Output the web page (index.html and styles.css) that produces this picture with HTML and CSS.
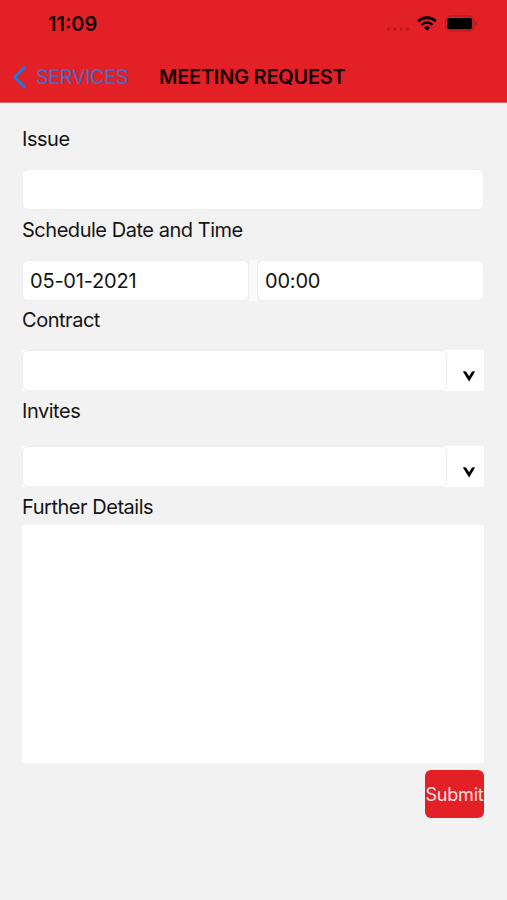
FILE: index.html
```html
<!DOCTYPE html>
<html lang="en">
<head>
    <meta charset="UTF-8">
    <meta name="viewport" content="width=device-width, initial-scale=1.0">
    <title>Meeting Request</title>
    <link rel="stylesheet" href="styles.css">
</head>
<body>

    <header class="header">
        <!-- Status bar -->
        <div class="status-bar">
            <span class="clock">11:09</span>
            <div class="status-icons">
                <svg class="signal" width="24" height="6" viewBox="0 0 24 6">
                    <circle cx="2.5" cy="3" r="1.6"/>
                    <circle cx="8.8" cy="3" r="1.6"/>
                    <circle cx="15.1" cy="3" r="1.6"/>
                    <circle cx="21.4" cy="3" r="1.6"/>
                </svg>
                <svg class="wifi" width="20" height="15" viewBox="0 0 20 15">
                    <path d="M1.2 5.2C6 .6 14 .6 18.8 5.2" fill="none" stroke="#000" stroke-width="2.8"/>
                    <path d="M4.4 8.8C7.6 5.8 12.4 5.8 15.6 8.8" fill="none" stroke="#000" stroke-width="2.5"/>
                    <path d="M6.8 11.4C8.6 9.7 11.4 9.7 13.2 11.4L10 14.7Z"/>
                </svg>
                <svg class="battery" width="33" height="17" viewBox="0 0 33 17">
                    <rect x="1" y="1" width="28" height="15" rx="4.5" fill="none" stroke="#a51c20"/>
                    <rect x="2.3" y="2.9" width="24.8" height="11.4" rx="2.2"/>
                    <path d="M30.6 6.3C32.5 7 32.5 10 30.6 10.7Z" fill="#a51c20"/>
                </svg>
            </div>
        </div>

        <!-- Navigation bar -->
        <nav class="nav-bar">
            <a class="back" href="#">
                <svg width="15" height="24" viewBox="0 0 15 24">
                    <path d="M12.3 2.3L2.6 12L12.3 21.7" fill="none" stroke="#2178dc" stroke-width="3.1" stroke-linecap="round" stroke-linejoin="round"/>
                </svg>
                <span>SERVICES</span>
            </a>
            <h1 class="title">MEETING REQUEST</h1>
        </nav>
    </header>

    <main class="form">
        <div class="label">Issue</div>
        <div class="field"></div>

        <div class="label">Schedule Date and Time</div>
        <div class="date-row">
            <div class="field">05-01-2021</div>
            <div class="spacer"></div>
            <div class="field">00:00</div>
        </div>

        <div class="label">Contract</div>
        <div class="select">
            <div class="field"></div>
            <svg class="arrow" width="12" height="11" viewBox="0 0 12 11">
                <path d="M0 .7C1.5 -.2 3 .3 3.5 1.2L6.1 5.2L8.6 1.2C9.2 .2 10.6 -.2 12 .7L6.1 10.6Z"/>
            </svg>
        </div>

        <div class="label">Invites</div>
        <div class="select invites">
            <div class="field"></div>
            <svg class="arrow" width="12" height="11" viewBox="0 0 12 11">
                <path d="M0 .7C1.5 -.2 3 .3 3.5 1.2L6.1 5.2L8.6 1.2C9.2 .2 10.6 -.2 12 .7L6.1 10.6Z"/>
            </svg>
        </div>

        <div class="label">Further Details</div>
        <div class="details"></div>

        <button class="submit">Submit</button>
    </main>

</body>
</html>
```
FILE: styles.css
```css
* {
    box-sizing: border-box;
}
body {
    font-family: Inter, "Liberation Sans", sans-serif;
    font-size: 20px;
    color: #141414;
    background: #f2f2f2;
    margin: 0;
    min-height: 100vh;
}
.header {
    height: 103px;
    background: #e32026;
    border-bottom: 1px solid #d9686a;
}
.status-bar {
    display: flex;
    justify-content: space-between;
    align-items: center;
    height: 47px;
    padding: 0 29px 0 48px;
}
.clock {
    font-size: 20px;
    font-weight: 600;
    color: #180304;
}
.status-icons {
    display: flex;
    align-items: center;
}
.signal {
    fill: #b4191e;
    margin: 10px 7px 0 0;
}
.wifi {
    margin-right: 8px;
}
.nav-bar {
    display: flex;
    align-items: center;
    height: 60px;
    padding-left: 12px;
}
.back {
    display: flex;
    align-items: center;
    gap: 9px;
    width: 147px;
    color: #4a69c4;
    letter-spacing: -0.5px;
    text-decoration: none;
}
.title {
    margin: 0;
    font-size: 20px;
    font-weight: 600;
    color: #180304;
    letter-spacing: -0.25px;
    white-space: nowrap;
}
.form {
    display: flex;
    flex-direction: column;
    padding: 24px 23px 0 22px;
}
.label {
    height: 24px;
    line-height: 24px;
    letter-spacing: -0.47px;
}
.field {
    display: flex;
    align-items: center;
    flex: 1;
    height: 41px;
    padding: 0 7px;
    letter-spacing: -0.2px;
    background: #fff;
    border: 1px solid #eee;
    border-radius: 6px;
}
.form > .field {
    flex: none;
    margin: 18px 0 8px;
}
.date-row {
    display: flex;
    margin: 18px 0 7px;
}
.spacer {
    width: 8px;
    background: #fafafa;
}
.select {
    display: flex;
    align-items: center;
    height: 41px;
    margin: 18px 0 8px;
    background: #fff;
}
.select .arrow {
    margin: 12px 9px 0 16px;
}
.invites {
    margin-top: 23px;
}
.details {
    height: 238px;
    margin-top: 6px;
    background: #fff;
}
.submit {
    align-self: flex-end;
    width: 59px;
    height: 48px;
    margin-top: 7px;
    padding: 0;
    font-family: inherit;
    font-size: 18px;
    letter-spacing: -0.2px;
    white-space: nowrap;
    color: #fbe3e4;
    background: #e32026;
    border: none;
    border-radius: 6px;
}
```
